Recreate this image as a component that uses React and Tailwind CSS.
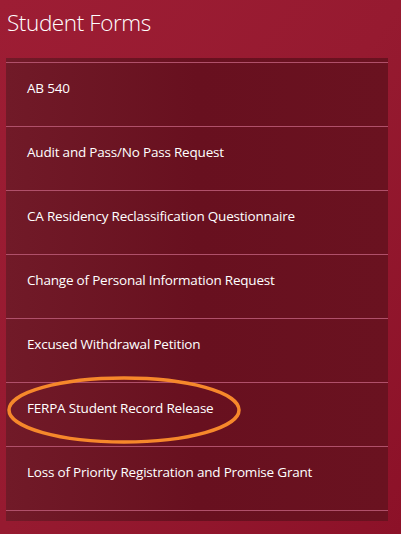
import React from "react";

const FORMS = [
  "AB 540",
  "Audit and Pass/No Pass Request",
  "CA Residency Reclassification Questionnaire",
  "Change of Personal Information Request",
  "Excused Withdrawal Petition",
  "FERPA Student Record Release",
  "Loss of Priority Registration and Promise Grant",
];

export default function App() {
  return (
    <div
      className="w-[401px] h-[534px] overflow-hidden bg-gradient-to-br from-[#9d1d34] via-[#961a30] to-[#8c1128] text-white"
      style={{ fontFamily: '"Open Sans", "Noto Sans", sans-serif' }}
    >
      <h1 className="pl-[7px] pt-[7px] h-[58px] text-[22.5px] font-light leading-[32px] tracking-[-0.4px]">
        Student Forms
      </h1>
      <div className="ml-[6px] w-[382px] pt-1 pb-[10px] bg-gradient-to-r from-[#711a28] via-[#68101f] to-[#6a1220]">
        <ul className="border-b border-[#b0506a]">
          {FORMS.map((name, i) => (
            <li
              key={name}
              className="relative h-16 border-t border-[#b0506a] pl-[21px] pt-[15px] text-[13.5px] leading-5 tracking-[-0.2px]"
            >
              {name}
              {i === 5 && (
                <svg
                  className="absolute left-0 top-[-7px] pointer-events-none"
                  width="245"
                  height="72"
                  viewBox="0 0 245 72"
                >
                  <ellipse
                    cx="118"
                    cy="34"
                    rx="115"
                    ry="32"
                    fill="none"
                    stroke="#f6882b"
                    strokeWidth="3.5"
                  />
                </svg>
              )}
            </li>
          ))}
        </ul>
      </div>
    </div>
  );
}
